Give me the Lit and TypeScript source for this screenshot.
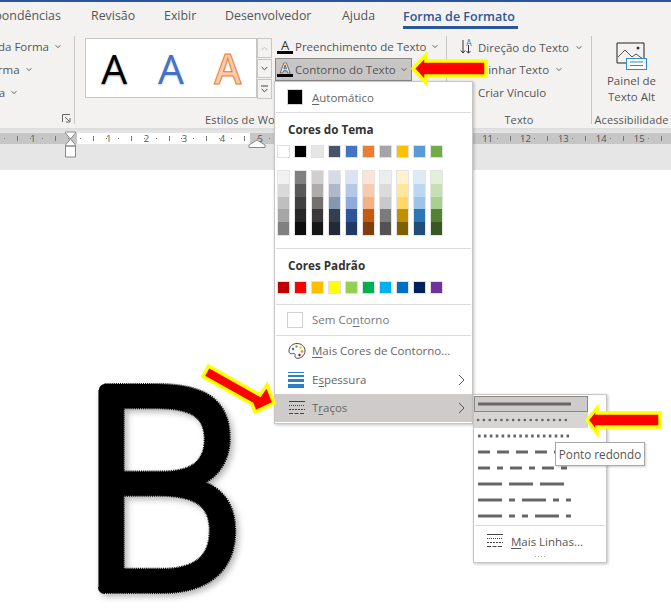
import { LitElement, html, css, svg } from "lit";
import { customElement } from "lit/decorators.js";

const THEME = ["#ffffff","#000000","#e7e6e6","#44546a","#4472c4","#ed7d31","#a5a5a5","#ffc000","#5b9bd5","#70ad47"];
const SHADES = [
  ["#f2f2f2","#d9d9d9","#bfbfbf","#a6a6a6","#808080"],
  ["#808080","#595959","#404040","#262626","#0d0d0d"],
  ["#d0cece","#aeabab","#757070","#3a3838","#161616"],
  ["#d6dce5","#adb9ca","#8497b0","#333f50","#222a35"],
  ["#dae3f3","#b4c7e7","#8faadc","#2f5597","#203864"],
  ["#fbe5d6","#f8cbad","#f4b183","#c55a11","#843c0c"],
  ["#ededed","#dbdbdb","#c9c9c9","#7b7b7b","#525252"],
  ["#fff2cc","#ffe699","#ffd966","#bf9000","#7f6000"],
  ["#deebf7","#bdd7ee","#9dc3e6","#2e75b6","#1f4e79"],
  ["#e2f0d9","#c5e0b4","#a9d18e","#548235","#385723"],
];
const STD = ["#c00000","#ff0000","#ffc000","#ffff00","#92d050","#00b050","#00b0f0","#0070c0","#002060","#7030a0"];
const RULER = ["","1","","1","2","3","4","5","","","","","","11","12","13","14","15","16"];
const DASHES: { d: string; w: number; cap?: string; cls?: string }[] = [
  { d: "", w: 3, cls: "sel" },
  { d: "0.1 5.75", w: 2.6, cap: "round", cls: "hov" },
  { d: "2.6 3.3", w: 3 },
  { d: "12 7", w: 3 },
  { d: "12 7 6 7", w: 3 },
  { d: "24 7", w: 3 },
  { d: "24 7 6 7", w: 3 },
  { d: "24 7 6 7 6 7", w: 3 },
];

const chev = html`<svg class="chev" viewBox="0 0 7 5" width="6" height="5"><path d="M.7 1 3.5 3.8 6.3 1" fill="none" stroke="#555" stroke-width="1.1"/></svg>`;
const dashIcon = html`<svg class="ico" viewBox="0 0 18 16" width="18" height="16"><g stroke="#444" fill="none"><path d="M1 1.500h16"/><path d="M1 5.500h16" stroke-dasharray="1 1"/><path d="M1 9.500h16" stroke-dasharray="2 1"/><path d="M1 13.500h16" stroke-dasharray="4 1.500"/></g></svg>`;

@customElement("app-root")
export class AppRoot extends LitElement {
  static styles = css`
    :host { display: block; width: 671px; height: 615px; overflow: hidden; position: relative; background: #fff;
      font-family: "Open Sans", "Noto Sans", sans-serif; color: #555; font-size: 12px; }
    svg { flex: none; }
    .page { display: flex; flex-direction: column; height: 615px; }
    .topbar { height: 2px; background: #2b579a; flex: none; }
    .tabs { height: 26px; background: #f3f2f1; display: flex; align-items: center; flex: none; font-size: 12.4px; white-space: nowrap; color: #555; }
    .tab { flex: none; }
    .tab.t0 { margin-left: -44px; width: 135px; }
    .tab.t1 { width: 73px; }
    .tab.t2 { width: 61px; }
    .tab.t3 { width: 117px; }
    .tab.t4 { width: 61px; }
    .tab.active { color: #2b579a; font-weight: 600; position: relative; height: 26px; line-height: 30px; font-size: 12.5px; width: 115px; }
    .tab.active::after { content: ""; position: absolute; left: 0; right: 0; bottom: -1px; height: 3px; background: #2b579a; }
    .ribbon { height: 100px; background: #f3f2f1; display: flex; flex: none; white-space: nowrap; }
    .group { flex: none; display: flex; flex-direction: column; position: relative; border-right: 1px solid #c8c6c4; margin: 8px 0 4px; }
    .g1 { width: 74px; }
    .g2 { width: 371px; }
    .g3 { width: 144px; }
    .g4 { width: 79px; }
    .gbody { flex: 1; min-height: 0; }
    .glabel { height: 16px; line-height: 16px; margin-bottom: -4px; text-align: center; font-size: 11px; color: #555; letter-spacing: .12px; flex: none; }
    .g2 .glabel { padding-right: 14px; }
    .col { display: flex; flex-direction: column; }
    .line { height: 23px; display: flex; align-items: center; gap: 3px; font-size: 11.5px; }
    .chev { margin-left: 3px; flex: none; }
    .g1 .gbody { overflow: hidden; }
    .g1 .col { margin-top: -1px; }
    .l1 { margin-left: -2px; }
    .l2 { margin-left: -15px; }
    .l3 { margin-left: -12px; }
    .launcher { position: absolute; right: 3px; bottom: 1px; }
    .g2body { display: flex; align-items: flex-start; }
    .gallery { margin: 2px 0 0 10px; width: 170px; height: 58px; background: #fff; border: 1px solid #c8c6c4; display: flex; flex: none; align-items: center; }
    .ga { font-size: 41px; line-height: 58px; font-weight: 400; flex: 1; text-align: center; }
    .ga.k { color: #000; text-shadow: 0 1px 2px rgba(0,0,0,.4); }
    .ga.b { color: #4472c4; text-shadow: 0 1px 2px rgba(68,114,196,.35); }
    .ga.o { color: #f8cbad; font-weight: 600; -webkit-text-stroke: 1px #ed7d31; }
    .scroll { display: flex; flex-direction: column; gap: 1px; margin: 2px 0 0 0; flex: none; }
    .sb { width: 13px; background: #f3f2f1; border: 1px solid #c8c6c4; display: flex; align-items: center; justify-content: center; }
    .sb.s1 { height: 18px; }
    .sb.s2 { height: 17px; }
    .sb.s3 { height: 18px; }
    .fills { margin: -1px 0 0 3px; width: 160px; }
    .fill-row { height: 23px; display: flex; align-items: center; font-size: 11.5px; padding-left: 2px; gap: 2px; box-sizing: border-box; white-space: nowrap; }
    .fill-row.on { background: #c8c6c4; border: 1px solid #8a8886; width: 137px; padding-left: 1px; }
    .g3 .col { padding-left: 13px; }
    .g3 .line { gap: 4px; margin-top: -.5px; }
    .spacer { width: 14px; flex: none; }
    .g4body { display: flex; flex-direction: column; align-items: center; padding-top: 6px; font-size: 11.5px; line-height: 16px; text-align: center; }
    .g4body svg { margin-bottom: 3px; }
    .shadow { height: 5px; background: linear-gradient(#dcdcdc, #e6e6e6); flex: none; }
    .rulerwrap { height: 37px; background: #e6e6e6; flex: none; overflow: hidden; }
    .ruler { height: 11px; background: linear-gradient(90deg, #c6c6c6 77px, #fff 77px, #fff 250px, #c6c6c6 250px); display: flex; overflow: hidden; }
    .rc { flex: none; width: 37.9px; display: flex; align-items: center; font-size: 9.5px; color: #555; line-height: 11px; }
    .rc:first-child { margin-left: -5px; }
    .rn { flex: none; width: 14px; margin-left: -7px; text-align: center; }
    .rm { flex: 1; display: flex; align-items: center; justify-content: space-between; padding: 0 2px; }
    .dot { width: 1px; height: 1px; background: #777; }
    .tk { width: 1px; height: 5px; background: #777; }
    .doc { flex: 1; background: #fff; padding: 211px 0 0 78px; overflow: hidden; }
    .bigb { display: block; filter: drop-shadow(3px 3px 3px rgba(0,0,0,.3)); overflow: visible; }
    .bigb text { font-family: "Open Sans", sans-serif; font-weight: 300; font-size: 276px; }
    .bfill { fill: #000; stroke: #000; stroke-width: 12; stroke-linejoin: round; }
    .bedge { fill: none; stroke: #000; stroke-width: 14; stroke-linejoin: round; stroke-dasharray: 1 1; }

    .marker { position: absolute; }
    .m1 { left: 63px; top: 131px; }
    .m2 { left: 248px; top: 139px; }

    .menu { position: absolute; left: 274px; top: 81px; width: 199px; height: 343px; box-sizing: border-box; background: #fff; border: 1px solid #c8c6c4; box-shadow: 1px 1px 3px rgba(0,0,0,.25); padding: 0 0 1px 0; color: #666; font-size: 11.5px; display: flex; flex-direction: column; }
    .mrow { flex: none; height: 30px; display: flex; align-items: center; padding-left: 13px; position: relative; }
    .mrow u { text-decoration-thickness: 1px; text-underline-offset: 2px; }
    .mrow .lbl { position: absolute; left: 37px; white-space: nowrap; }
    .mrow .gt { position: absolute; left: 183px; top: 50%; margin-top: -6px; }
    .sep { flex: none; height: 1px; background: #dcdcdc; margin: 0 1px; }
    .autosw { width: 14px; height: 14px; background: #000; box-shadow: 0 0 0 1px #d5d5d5; }
    .mh { flex: none; height: 32px; line-height: 32px; padding-left: 13px; font-weight: 700; color: #333; font-size: 11.7px; }
    .swrow { flex: none; display: flex; gap: 4px; padding-left: 2px; }
    .sw { width: 11px; height: 11px; border: 1px solid #e0e0e0; flex: none; }
    .shades { flex: none; display: flex; gap: 4px; padding-left: 2px; margin: 12px 0 12px; }
    .shcol { width: 11px; border: 1px solid #e4e4e4; display: flex; flex-direction: column; flex: none; }
    .shc { height: 12.8px; }
    .std { margin-bottom: 10px; }
    .box { width: 14px; height: 14px; border: 1px solid #d0d0d0; margin-left: -1px; }
    .muted { color: #777; }
    .hl { background: #cdcccb; height: 28px; }
    .h28 { height: 28px; }

    .sub { position: absolute; left: 473px; top: 394px; width: 134px; height: 169px; box-sizing: border-box; background: #fff; border: 1px solid #c8c6c4; box-shadow: 1px 1px 3px rgba(0,0,0,.25); padding-top: 1px; display: flex; flex-direction: column; }
    .dr { flex: none; height: 16px; width: 114px; box-sizing: border-box; display: flex; align-items: center; }
    .dr svg { display: block; }
    .dr.sel { background: #cdcccb; border: 1px solid #8a8886; }
    .dr.sel svg { margin-left: -1px; }
    .dr.hov { background: #d6d5d4; }
    .subsep { flex: none; height: 1px; background: #dcdcdc; margin: 1px 1px 0; }
    .more { flex: none; height: 30px; display: flex; align-items: center; padding-left: 12px; gap: 7px; font-size: 11.5px; color: #555; white-space: nowrap; }
    .more u { text-decoration-thickness: 1px; text-underline-offset: 2px; }
    .grip { flex: none; display: flex; justify-content: center; gap: 2px; }
    .grip i { width: 1px; height: 1px; background: #aaa; }
    .tip { position: absolute; left: 555px; top: 442px; width: 90px; height: 24px; box-sizing: border-box; background: #fff; border: 1px solid #a8a8a8; box-shadow: 1px 1px 2px rgba(0,0,0,.2); font-size: 11.7px; line-height: 22px; text-align: center; color: #555; white-space: nowrap; }
    .arrows { position: absolute; left: 0; top: 0; pointer-events: none; }
  `;

  render() {
    return html`
      <div class="page">
        <div class="topbar"></div>
        <div class="tabs">
          <span class="tab t0">Correspondências</span>
          <span class="tab t1">Revisão</span>
          <span class="tab t2">Exibir</span>
          <span class="tab t3">Desenvolvedor</span>
          <span class="tab t4">Ajuda</span>
          <span class="tab active">Forma de Formato</span>
        </div>
        <div class="ribbon">
          <div class="group g1">
            <div class="gbody">
              <div class="col">
                <div class="line l1">da Forma ${chev}</div>
                <div class="line l2">Forma ${chev}</div>
                <div class="line l3">ma ${chev}</div>
              </div>
            </div>
            <svg class="launcher" width="9" height="9" viewBox="0 0 9 9"><path d="M.5 8V.5H8M3 3l4.500 4.500M4 8h4V4" fill="none" stroke="#666"/></svg>
          </div>
          <div class="group g2">
            <div class="gbody g2body">
              <div class="gallery">
                <span class="ga k">A</span><span class="ga b">A</span><span class="ga o">A</span>
              </div>
              <div class="scroll">
                <div class="sb s1"><svg width="7" height="5" viewBox="0 0 7 5"><path d="M.7 4 3.500 1.200 6.300 4" fill="none" stroke="#bbb"/></svg></div>
                <div class="sb s2"><svg width="7" height="5" viewBox="0 0 7 5"><path d="M.7 1 3.500 3.800 6.300 1" fill="none" stroke="#444"/></svg></div>
                <div class="sb s3"><svg width="7" height="9" viewBox="0 0 7 9"><path d="M0 1h7M.7 4 3.500 6.800 6.300 4" fill="none" stroke="#444"/></svg></div>
              </div>
              <div class="fills col">
                <div class="fill-row">
                  <svg width="16" height="16" viewBox="0 0 16 16"><text x="8" y="11" text-anchor="middle" font-size="13" font-family="Open Sans" fill="#333">A</text><rect y="12" width="16" height="3" fill="#000"/></svg>
                  <span>Preenchimento de Texto</span>${chev}
                </div>
                <div class="fill-row on">
                  <svg width="16" height="16" viewBox="0 0 16 16"><text x="8" y="11" text-anchor="middle" font-size="14" font-weight="700" font-family="Open Sans" fill="#fff" stroke="#333" stroke-width=".7">A</text><rect y="12" width="16" height="3" fill="#000"/></svg>
                  <span>Contorno do Texto</span>${chev}
                </div>
              </div>
            </div>
            <div class="glabel">Estilos de WordArt</div>
          </div>
          <div class="group g3">
            <div class="gbody col">
              <div class="line">
                <svg width="14" height="18" viewBox="0 0 14 18"><path d="M3 2v13M.8 12.500 3 15l2.200-2.500M8.500 7v8M6.500 13 8.500 15.200 10.500 13" fill="none" stroke="#333"/><text x="6" y="8" font-size="9" font-family="Open Sans" fill="#2e75b6">A</text></svg>
                <span>Direção do Texto</span>${chev}
              </div>
              <div class="line">
                <span class="spacer"></span>
                <span>Alinhar Texto</span>${chev}
              </div>
              <div class="line">
                <span class="spacer"></span>
                <span>Criar Vínculo</span>
              </div>
            </div>
            <div class="glabel">Texto</div>
          </div>
          <div class="group g4">
            <div class="gbody g4body">
              <svg width="31" height="28" viewBox="0 0 31 28">
                <path d="M1 21V1h27v20" fill="none" stroke="#222"/><path d="M1 21h10" stroke="#222"/>
                <path d="M2 15l7-7 7 7 4-3 7 5" fill="none" stroke="#555"/><circle cx="22" cy="6" r="1.500" fill="#333"/>
                <rect x="10.500" y="16.500" width="20" height="11" fill="#fff" stroke="#2e8bc9"/><path d="M14 20h13M14 23.500h13" stroke="#2e8bc9"/>
              </svg>
              <span>Painel de</span><span>Texto Alt</span>
            </div>
            <div class="glabel">Acessibilidade</div>
          </div>
        </div>
        <div class="shadow"></div>
        <div class="rulerwrap">
          <div class="ruler">
            ${RULER.map((n) => html`<div class="rc"><span class="rn">${n}</span><span class="rm"><i class="dot"></i><i class="tk"></i><i class="dot"></i></span></div>`)}
          </div>
        </div>
        <div class="doc">
          <svg class="bigb" width="200" height="240" viewBox="0 0 200 240">
            <g transform="scale(.96 1)">
              <use href="#bigletter" class="bedge"></use>
              <g class="bfill"><text id="bigletter" x="0" y="206">B</text></g>
            </g>
          </svg>
        </div>
      </div>

      <svg class="marker m1" width="16" height="27" viewBox="0 0 16 27"><path d="M2.500 1h10v1L7.500 8 2.500 2zM7.500 8l5 6v1h-10v-1zM2.500 15h10v11h-10z" fill="#fff" stroke="#888"/></svg>
      <svg class="marker m2" width="18" height="9" viewBox="0 0 18 9"><path d="M1 8.500V6l8-5 8 5v2.500z" fill="#fff" stroke="#888"/></svg>

      <div class="menu">
        <div class="mrow"><span class="autosw"></span><span class="lbl"><u>A</u>utomático</span></div>
        <div class="sep"></div>
        <div class="mh">Cores do Tema</div>
        <div class="swrow">${THEME.map((c) => html`<span class="sw" style="background:${c}"></span>`)}</div>
        <div class="shades">${SHADES.map((col) => html`<div class="shcol">${col.map((c) => html`<span class="shc" style="background:${c}"></span>`)}</div>`)}</div>
        <div class="sep"></div>
        <div class="mh">Cores Padrão</div>
        <div class="swrow std">${STD.map((c) => html`<span class="sw" style="background:${c}"></span>`)}</div>
        <div class="sep"></div>
        <div class="mrow muted"><span class="box"></span><span class="lbl">Sem Co<u>n</u>torno</span></div>
        <div class="sep"></div>
        <div class="mrow">
          <svg width="18" height="18" viewBox="0 0 18 18"><path d="M9 1.500C4.500 1.500 1 4.800 1 9c0 3 2.500 3 3.800 2.500 1.500-.5 2.700.5 2.200 2-.5 1.800 1 3 3 2.800 4-.5 7-3.600 7-7.300 0-4.600-3.500-7.500-8-7.500z" fill="#fff" stroke="#444"/><circle cx="5" cy="7" r="1.200" fill="#2e75b6"/><circle cx="8.500" cy="4.500" r="1.200" fill="#70ad47"/><circle cx="12.500" cy="5.500" r="1.200" fill="#ffc000"/><circle cx="14" cy="9.500" r="1.200" fill="#ed7d31"/><circle cx="11.500" cy="13" r="1.200" fill="#c00000"/></svg>
          <span class="lbl"><u>M</u>ais Cores de Contorno...</span>
        </div>
        <div class="mrow h28">
          <svg width="16" height="16" viewBox="0 0 16 16"><g fill="#2e80c4"><rect width="16" height="1"/><rect y="3" width="16" height="2"/><rect y="7" width="16" height="3"/><rect y="12" width="16" height="4"/></g></svg>
          <span class="lbl">E<u>s</u>pessura</span>
          <svg class="gt" width="7" height="12" viewBox="0 0 7 12"><path d="M1 1l5 5-5 5" fill="none" stroke="#555"/></svg>
        </div>
        <div class="mrow hl">
          ${dashIcon}
          <span class="lbl">T<u>r</u>aços</span>
          <svg class="gt" width="7" height="12" viewBox="0 0 7 12"><path d="M1 1l5 5-5 5" fill="none" stroke="#555"/></svg>
        </div>
      </div>

      <div class="sub">
        ${DASHES.map((r) => html`<div class="dr ${r.cls ?? ""}"><svg width="114" height="8" viewBox="0 0 114 8">${svg`<line x1="4" x2="97" y1="4" y2="4" stroke="#666" stroke-width=${r.w} stroke-dasharray=${r.d || "none"} stroke-linecap=${r.cap ?? "butt"}></line>`}</svg></div>`)}
        <div class="subsep"></div>
        <div class="more">${dashIcon}<span><u>M</u>ais Linhas...</span></div>
        <div class="grip"><i></i><i></i><i></i><i></i></div>
      </div>
      <div class="tip">Ponto redondo</div>

      <svg class="arrows" width="671" height="615" viewBox="0 0 671 615">
        <g fill="#ff0000" stroke="#ffff00" stroke-width="3.500" stroke-linejoin="miter" stroke-miterlimit="6">
          <polygon points="413,68.500 426,55 426,61 486,61 486,76 426,76 426,83"></polygon>
          <polygon points="587,420 597,408 597,413 660,413 660,427 597,427 597,433"></polygon>
          <polygon points="208.500,366 260,395 267,385 274,403 255,412 252,404 203,376.500"></polygon>
        </g>
      </svg>
    `;
  }
}
